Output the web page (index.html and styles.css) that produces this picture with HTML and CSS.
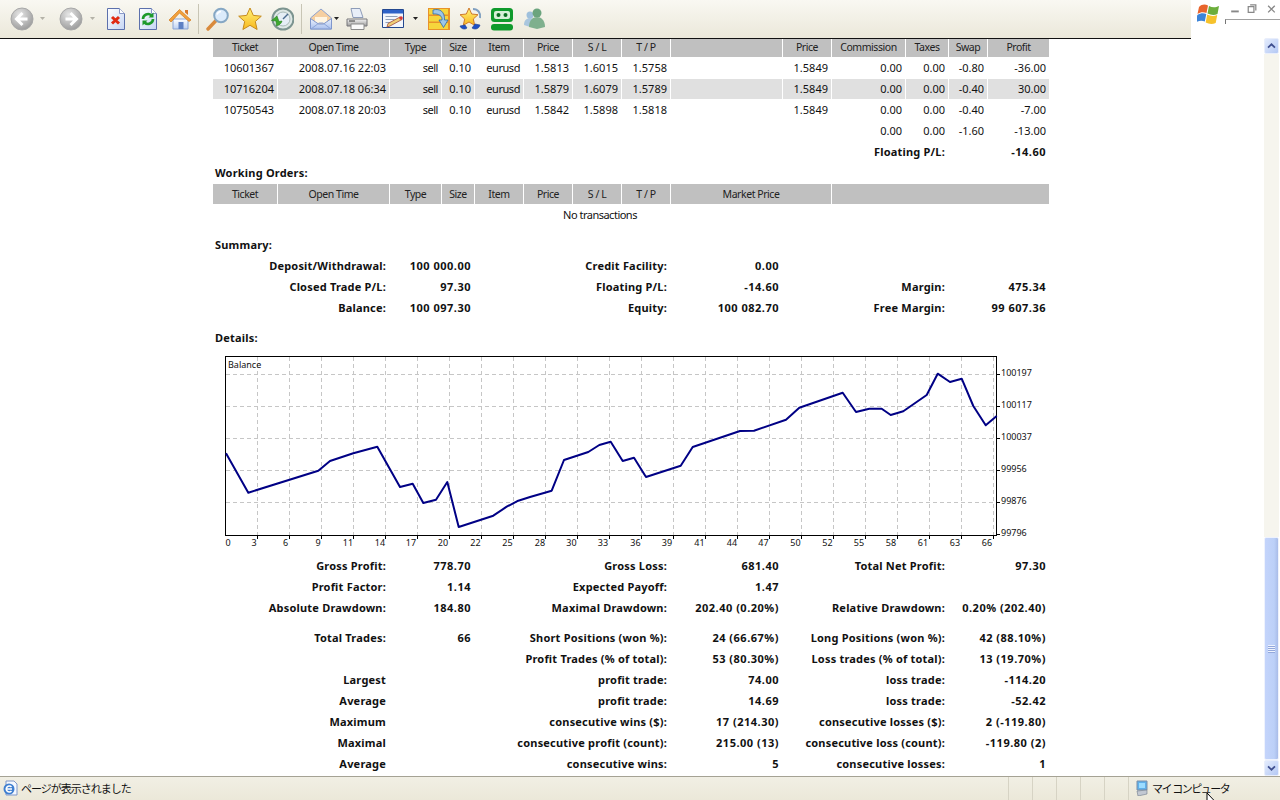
FILE: index.html
```html
<!DOCTYPE html>
<html lang="en">
<head>
<meta charset="utf-8">
<title>Statement</title>
<link rel="stylesheet" href="styles.css">
</head>
<body>
<svg class="defs" width="0" height="0" aria-hidden="true">
  <defs>
    <radialGradient id="gBall" cx="40%" cy="30%" r="75%"><stop offset="0" stop-color="#e6e6e6"/><stop offset="1" stop-color="#989898"/></radialGradient>
    <linearGradient id="gDoc" x1="0" y1="0" x2="1" y2="1"><stop offset="0" stop-color="#ffffff"/><stop offset="1" stop-color="#c6d6f4"/></linearGradient>
    <linearGradient id="gStar" x1="0" y1="0" x2="0" y2="1"><stop offset="0" stop-color="#fff27a"/><stop offset="1" stop-color="#f8b81c"/></linearGradient>
    <linearGradient id="gEnv" x1="0" y1="0" x2="0" y2="1"><stop offset="0" stop-color="#eef3fd"/><stop offset="1" stop-color="#a9c0ee"/></linearGradient>
    <linearGradient id="gGrey" x1="0" y1="0" x2="0" y2="1"><stop offset="0" stop-color="#f4f4f4"/><stop offset="1" stop-color="#9c9c9c"/></linearGradient>
    <linearGradient id="gWall" x1="0" y1="0" x2="0" y2="1"><stop offset="0" stop-color="#ffffff"/><stop offset="1" stop-color="#bcd0f2"/></linearGradient>
  </defs>
</svg>

<header class="top">
  <nav class="toolbar">
    <svg class="ic ml-10" viewBox="0 0 24 24"><circle cx="12" cy="12" r="11" fill="url(#gBall)" stroke="#a8a8a8"/><path d="M12.500 6 6.500 12l6 6M7 12h10.500" fill="none" stroke="#fff" stroke-width="3"/></svg>
    <svg class="drop ml-6" viewBox="0 0 5 3"><path d="M0 0h5L2.500 3z" fill="#b4b2a8"/></svg>
    <svg class="ic ml-14" viewBox="0 0 24 24"><circle cx="12" cy="12" r="11" fill="url(#gBall)" stroke="#a8a8a8"/><path d="M11.500 6l6 6-6 6M17 12H6.500" fill="none" stroke="#fff" stroke-width="3"/></svg>
    <svg class="drop ml-7" viewBox="0 0 5 3"><path d="M0 0h5L2.500 3z" fill="#b4b2a8"/></svg>
    <svg class="ic ic-doc ml-10" viewBox="0 0 22 24"><path d="M2.500 1.500h12l5 5v16h-17z" fill="url(#gDoc)" stroke="#5c70ac"/><path d="M14.500 1.500v5h5" fill="#fff" stroke="#8a9ac8"/><path d="M7 10l7 6.500M14 10l-7 6.500" stroke="#e02a14" stroke-width="3"/></svg>
    <svg class="ic ic-doc ml-10" viewBox="0 0 22 24"><path d="M2.500 1.500h12l5 5v16h-17z" fill="url(#gDoc)" stroke="#5c70ac"/><path d="M14.500 1.500v5h5" fill="#fff" stroke="#8a9ac8"/><path d="M6 12a5 5 0 0 1 8.500-3.500M16 12a5 5 0 0 1-8.500 3.500" fill="none" stroke="#1e9a2c" stroke-width="2.600"/><path d="M16.500 5.500v5h-5zM5.500 18.500v-5h5z" fill="#1e9a2c"/></svg>
    <svg class="ic ml-9" viewBox="0 0 24 24"><path d="M5 12h15v10H5z" fill="url(#gWall)" stroke="#8ba4d4"/><path d="M10.500 15h5v7h-5z" fill="#5d80c4"/><path d="M1 13 11.500 2.500 23 13l-2 1.500L11.500 6 3 15z" fill="#f2a03a" stroke="#d07a20" stroke-width=".7"/><path d="M17 3h3v5l-3-2.500z" fill="#d9782a"/></svg>
    <span class="sep ml-6"></span>
    <svg class="ic ml-7" viewBox="0 0 24 24"><path d="M2 22l8.500-9" stroke="#d98a3c" stroke-width="3.400" stroke-linecap="round"/><circle cx="15" cy="8.500" r="6.800" fill="#dcebfb" stroke="#86a7c4" stroke-width="2"/><path d="M11 7.500a4.500 4.500 0 0 1 4-3" fill="none" stroke="#fff" stroke-width="1.500"/></svg>
    <svg class="ic ml-8" viewBox="0 0 24 24"><path d="M12 1l3.300 7.400 8 .8-6 5.300 1.800 8L12 18.300 4.900 22.500l1.800-8-6-5.300 8-.8z" fill="url(#gStar)" stroke="#c68a1c"/></svg>
    <svg class="ic ml-8" viewBox="0 0 24 24"><circle cx="13" cy="12" r="10.500" fill="#dfe8e6" stroke="#7c9490" stroke-width="2"/><circle cx="13" cy="12" r="7" fill="#e6eef6" stroke="#a9bbb8"/><path d="M13 12l5-5" stroke="#4b6b8f" stroke-width="1.500"/><path d="M7 9 1.500 13.500l4.500.5.500 5c2.500-.5 5-2.500 5.500-5l-3 .5z" fill="#3ea82e" stroke="#26801f" stroke-width=".6"/></svg>
    <span class="sep ml-7"></span>
    <svg class="ic ml-7" viewBox="0 0 24 24"><path d="M1.500 11 12 2l10.500 9v11h-21z" fill="#f6cfa0" stroke="#8ea2cf"/><path d="M6 10h12v6H6z" fill="#fff5e2"/><path d="M1.500 11.500 9.500 17h5l8-5.500V22h-21z" fill="url(#gEnv)" stroke="#7f97cc"/><path d="M2 22l8-6h4l8 6" fill="none" stroke="#8ba4d8"/></svg>
    <svg class="drop ml-1" viewBox="0 0 5 3"><path d="M0 0h5L2.500 3z" fill="#222"/></svg>
    <svg class="ic ml-6" viewBox="0 0 24 24"><path d="M6 1.500h9l3 9H8z" fill="#e8eef8" stroke="#8e9cb8"/><path d="M2 12h20v7H2z" fill="url(#gGrey)" stroke="#77777a"/><path d="M6 17h13v5.500H6z" fill="#fafafa" stroke="#8a8a8a"/><path d="M4 14h6" stroke="#3c3c3c"/></svg>
    <svg class="ic ml-12" viewBox="0 0 24 24"><path d="M1.500 2.500h21v18h-21z" fill="#f3f6fc" stroke="#24488f"/><path d="M2 3h20v3.500H2z" fill="#2d62c8"/><path d="M4.500 9.500h12M4.500 12.500h9M4.500 15.500h6" stroke="#8fa0b8"/><path d="M6 20l1-3.500L19 10l2 2.500L9 19z" fill="#f0cf78" stroke="#a04a3c" stroke-width=".8"/><circle cx="20" cy="11" r="1.800" fill="#d83a3a"/></svg>
    <svg class="drop ml-8" viewBox="0 0 5 3"><path d="M0 0h5L2.500 3z" fill="#222"/></svg>
    <svg class="ic ml-9" viewBox="0 0 24 24"><path d="M1 1h22v22H1z" fill="#e8932a"/><path d="M2 2h19v5.500H2zM2 9h19v5.500H2zM2 16h19v6H2z" fill="#f6d63c"/><path d="M6 3c7-2 12 2 11.500 10h3.500l-4.500 7.500-4.500-7.500h3c.5-4-3-6.500-9-6z" fill="#9cc6e8" stroke="#2f6aa8" stroke-width=".8"/></svg>
    <svg class="ic ml-7" viewBox="0 0 24 24"><path d="M11 1l2.700 6 6.300.7-4.700 4.300 1.400 6.300L11 15l-5.700 3.300 1.400-6.300L2 7.700 8.300 7z" fill="url(#gStar)" stroke="#cf7a2c"/><path d="M15 2c5 0 8 4 7 9" fill="none" stroke="#7f9fc0" stroke-width="2"/><path d="M2 19c1 3 5 4 7 2l-2-3zM14 21c3 2 7 1 8-3l-5-1z" fill="#1f4fc4" stroke="#123a90" stroke-width=".6"/></svg>
    <svg class="ic ml-8" viewBox="0 0 24 24"><rect x="1" y="1" width="22" height="14" rx="3.500" fill="#0f9a2c"/><rect x="4" y="4" width="16" height="8" rx="2" fill="#d8f0d8"/><circle cx="8.500" cy="8" r="2" fill="#0b6e20"/><circle cx="15.500" cy="8" r="2" fill="#0b6e20"/><rect x="1" y="17" width="22" height="6.500" rx="3" fill="#0f9a2c"/></svg>
    <svg class="ic ml-8" viewBox="0 0 24 24"><circle cx="8" cy="8" r="3.500" fill="#9fc0dc"/><path d="M2 18c0-5 3-7 6-7s5 2 5 6l-5 3z" fill="#a9c6de"/><circle cx="15" cy="6" r="4.500" fill="#6ba47e"/><path d="M7 20c0-7 4-10 8-10s8 3 8 10l-8 2z" fill="#7fb08e"/></svg>
  </nav>
  <div class="corner">
    <svg class="winlogo" viewBox="0 0 24 24"><path d="M2 6c3-3 6-3 9-1.500L9.500 12C6 10.500 3.500 11 .5 13z" fill="#e8642c"/><path d="M12 5c3 1.500 6 2 10 0l-1.500 8c-3.500 1.500-6.500 1-10-.5z" fill="#6cae3c"/><path d="M.3 14c3-2 6-2.500 9-1l-1.500 7.500c-3-1.500-6-1-9 1z" fill="#3c84d8"/><path d="M10.200 13.500c3 1.500 6.500 2 10 .5L18.700 22c-3.500 1.500-7 1-10-.5z" fill="#f6c22c"/></svg>
    <div class="winctl">
      <svg class="controls" viewBox="0 0 55 19"><path d="M5 11h8" stroke="#888" stroke-width="2"/><path d="M23 6h6v6h-6zM25 4h6v6" fill="none" stroke="#888" stroke-width="1.300"/><path d="M44 5l7 7M51 5l-7 7" stroke="#888" stroke-width="1.400"/></svg>
      <div class="addr"></div>
    </div>
  </div>
</header>

<main class="main">
  <div class="page">
    <table class="stmt">
      <colgroup>
        <col class="c64"><col class="c111"><col class="c51"><col class="c32"><col class="c48"><col class="c48"><col class="c48"><col class="c48"><col class="c111"><col class="c48"><col class="c73"><col class="c42"><col class="c38"><col class="c61">
      </colgroup>
      <tr class="head"><th>Ticket</th><th>Open Time</th><th>Type</th><th>Size</th><th>Item</th><th>Price</th><th>S / L</th><th>T / P</th><th></th><th>Price</th><th>Commission</th><th>Taxes</th><th>Swap</th><th>Profit</th></tr>
      <tr class="data"><td>10601367</td><td>2008.07.16 22:03</td><td>sell</td><td>0.10</td><td>eurusd</td><td>1.5813</td><td>1.6015</td><td>1.5758</td><td></td><td>1.5849</td><td>0.00</td><td>0.00</td><td>-0.80</td><td>-36.00</td></tr>
      <tr class="data alt"><td>10716204</td><td>2008.07.18 06:34</td><td>sell</td><td>0.10</td><td>eurusd</td><td>1.5879</td><td>1.6079</td><td>1.5789</td><td></td><td>1.5849</td><td>0.00</td><td>0.00</td><td>-0.40</td><td>30.00</td></tr>
      <tr class="data"><td>10750543</td><td>2008.07.18 20:03</td><td>sell</td><td>0.10</td><td>eurusd</td><td>1.5842</td><td>1.5898</td><td>1.5818</td><td></td><td>1.5849</td><td>0.00</td><td>0.00</td><td>-0.40</td><td>-7.00</td></tr>
      <tr><td colspan="10"></td><td>0.00</td><td>0.00</td><td>-1.60</td><td>-13.00</td></tr>
      <tr class="b"><td colspan="8"></td><td></td><td colspan="3">Floating P/L:</td><td colspan="2">-14.60</td></tr>
      <tr class="b"><td colspan="14" class="sect">Working Orders:</td></tr>
      <tr class="head"><th>Ticket</th><th>Open Time</th><th>Type</th><th>Size</th><th>Item</th><th>Price</th><th>S / L</th><th>T / P</th><th colspan="2">Market Price</th><th colspan="4"></th></tr>
      <tr><td colspan="13" class="mid">No transactions</td><td></td></tr>
      <tr class="gap"><td colspan="14"></td></tr>
      <tr class="b"><td colspan="14" class="sect">Summary:</td></tr>
      <tr class="b"><td colspan="2">Deposit/Withdrawal:</td><td colspan="2">100 000.00</td><td colspan="4">Credit Facility:</td><td>0.00</td><td colspan="3"></td><td colspan="2"></td></tr>
      <tr class="b"><td colspan="2">Closed Trade P/L:</td><td colspan="2">97.30</td><td colspan="4">Floating P/L:</td><td>-14.60</td><td colspan="3">Margin:</td><td colspan="2">475.34</td></tr>
      <tr class="b"><td colspan="2">Balance:</td><td colspan="2">100 097.30</td><td colspan="4">Equity:</td><td>100 082.70</td><td colspan="3">Free Margin:</td><td colspan="2">99 607.36</td></tr>
      <tr class="gap"><td colspan="14"></td></tr>
      <tr class="b"><td colspan="14" class="sect">Details:</td></tr>
      <tr class="chartrow"><td colspan="14">
        <svg class="chart" viewBox="213 349 836 206">
          <path class="grid" d="M226 374.500H996M226 406.500H996M226 438.500H996M226 470.500H996M226 502.500H996M257.500 357V535M289.500 357V535M321.500 357V535M353.500 357V535M385.500 357V535M417.500 357V535M449.500 357V535M481.500 357V535M513.500 357V535M545.500 357V535M577.500 357V535M609.500 357V535M641.500 357V535M673.500 357V535M705.500 357V535M737.500 357V535M769.500 357V535M801.500 357V535M833.500 357V535M865.500 357V535M897.500 357V535M929.500 357V535M961.500 357V535M993.500 357V535"/>
          <rect class="frame" x="225.500" y="356.500" width="771" height="179"/>
          <path class="ticks" d="M997 374.500h3M997 406.500h3M997 438.500h3M997 470.500h3M997 502.500h3M997 534.500h3M257.500 536v3M289.500 536v3M321.500 536v3M353.500 536v3M385.500 536v3M417.500 536v3M449.500 536v3M481.500 536v3M513.500 536v3M545.500 536v3M577.500 536v3M609.500 536v3M641.500 536v3M673.500 536v3M705.500 536v3M737.500 536v3M769.500 536v3M801.500 536v3M833.500 536v3M865.500 536v3M897.500 536v3M929.500 536v3M961.500 536v3M993.500 536v3"/>
          <polyline class="curve" points="226,453.300 248.300,492.700 318.300,470.700 330,461 353.300,453.300 377.300,446.700 400,487 412.700,483.700 423.300,503 436,499.700 447.300,482 458.700,527 493.300,515.700 506.700,506.700 518.300,500.700 530,497 551.700,490.700 564,460 588.300,452 599.300,445 610.700,441.700 622.700,461 634,457.700 646,477 680.700,465.700 692.700,447 740,431 754,430.700 786,419.700 799.300,407.700 842.700,392.700 856,412 869.300,408.700 881.700,408.700 890.700,415 903.300,411.300 926.700,395 937.700,373.700 950,382 961.700,378.700 973.300,406 985.700,425.300 996.700,416"/>
          <text class="lbl" x="228" y="368">Balance</text>
          <g class="ylbl">
            <text x="1001" y="376">100197</text><text x="1001" y="408">100117</text><text x="1001" y="440">100037</text><text x="1001" y="472">99956</text><text x="1001" y="504">99876</text><text x="1001" y="536">99796</text>
          </g>
          <g class="xlbl">
            <text x="228" y="546">0</text><text x="254" y="546">3</text><text x="285.500" y="546">6</text><text x="318" y="546">9</text><text x="348" y="546">11</text><text x="380" y="546">14</text><text x="411" y="546">17</text><text x="443" y="546">20</text><text x="475.500" y="546">22</text><text x="507.500" y="546">25</text><text x="540" y="546">28</text><text x="571.500" y="546">30</text><text x="603" y="546">33</text><text x="635.500" y="546">36</text><text x="667" y="546">39</text><text x="699.500" y="546">41</text><text x="732" y="546">44</text><text x="763.500" y="546">47</text><text x="795.500" y="546">50</text><text x="827.500" y="546">52</text><text x="859" y="546">55</text><text x="891" y="546">58</text><text x="923" y="546">61</text><text x="955" y="546">63</text><text x="987" y="546">66</text>
          </g>
        </svg>
      </td></tr>
      <tr class="b"><td colspan="2">Gross Profit:</td><td colspan="2">778.70</td><td colspan="4">Gross Loss:</td><td>681.40</td><td colspan="3">Total Net Profit:</td><td colspan="2">97.30</td></tr>
      <tr class="b"><td colspan="2">Profit Factor:</td><td colspan="2">1.14</td><td colspan="4">Expected Payoff:</td><td>1.47</td><td colspan="3"></td><td colspan="2"></td></tr>
      <tr class="b"><td colspan="2">Absolute Drawdown:</td><td colspan="2">184.80</td><td colspan="4">Maximal Drawdown:</td><td>202.40 (0.20%)</td><td colspan="3">Relative Drawdown:</td><td colspan="2">0.20% (202.40)</td></tr>
      <tr class="gap"><td colspan="14"></td></tr>
      <tr class="b"><td colspan="2">Total Trades:</td><td colspan="2">66</td><td colspan="4">Short Positions (won %):</td><td>24 (66.67%)</td><td colspan="3">Long Positions (won %):</td><td colspan="2">42 (88.10%)</td></tr>
      <tr class="b"><td colspan="2"></td><td colspan="2"></td><td colspan="4">Profit Trades (% of total):</td><td>53 (80.30%)</td><td colspan="3">Loss trades (% of total):</td><td colspan="2">13 (19.70%)</td></tr>
      <tr class="b"><td colspan="2">Largest</td><td colspan="2"></td><td colspan="4">profit trade:</td><td>74.00</td><td colspan="3">loss trade:</td><td colspan="2">-114.20</td></tr>
      <tr class="b"><td colspan="2">Average</td><td colspan="2"></td><td colspan="4">profit trade:</td><td>14.69</td><td colspan="3">loss trade:</td><td colspan="2">-52.42</td></tr>
      <tr class="b"><td colspan="2">Maximum</td><td colspan="2"></td><td colspan="4">consecutive wins ($):</td><td>17 (214.30)</td><td colspan="3">consecutive losses ($):</td><td colspan="2">2 (-119.80)</td></tr>
      <tr class="b"><td colspan="2">Maximal</td><td colspan="2"></td><td colspan="4">consecutive profit (count):</td><td>215.00 (13)</td><td colspan="3">consecutive loss (count):</td><td colspan="2">-119.80 (2)</td></tr>
      <tr class="b"><td colspan="2">Average</td><td colspan="2"></td><td colspan="4">consecutive wins:</td><td>5</td><td colspan="3">consecutive losses:</td><td colspan="2">1</td></tr>
    </table>
  </div>
  <aside class="scrollbar">
    <div class="sbtn"><svg viewBox="0 0 15 16"><path d="M3.500 10 7.500 6l4 4" fill="none" stroke="#3f4f8f" stroke-width="2"/></svg></div>
    <div class="track"></div>
    <div class="thumb"><span class="grip"></span></div>
    <div class="sbtn"><svg viewBox="0 0 15 16"><path d="M3.500 6l4 4 4-4" fill="none" stroke="#3f4f8f" stroke-width="2"/></svg></div>
  </aside>
</main>

<footer class="status">
  <div class="msg">
    <svg class="ie" viewBox="0 0 16 16"><path d="M4 1h8l3 3v11H4z" fill="#f4f8ff" stroke="#7f97c8"/><circle cx="7" cy="9" r="5.500" fill="#3f7fd0"/><path d="M3.500 9h6.500M9.500 7A3 3 0 1 0 9.500 11" fill="none" stroke="#fff" stroke-width="1.500"/></svg>
    <span>ページが表示されました</span>
  </div>
  <div class="cell"></div><div class="cell"></div><div class="cell"></div><div class="cell"></div><div class="cell"></div>
  <div class="zone">
    <svg class="pc" viewBox="0 0 12 16"><path d="M1 1h10v9H1z" fill="#5fb0ea" stroke="#7c8fa8"/><path d="M3 3h6v5H3z" fill="#9bdcff"/><path d="M1 11l10-1v4l-9 2z" fill="#c2c8d2" stroke="#6f7a8c" stroke-width=".6"/></svg>
    <span>マイ コンピュータ</span>
  </div>
</footer>
<svg class="cursor" viewBox="0 0 12 19"><path d="M1 1v14l3.500-3 2.500 6 2-1-2.500-5.500H11z" fill="#fff" stroke="#000"/></svg>
</body>
</html>
```
FILE: styles.css
```css
* { box-sizing: border-box; }
html, body { height: 100%; }
body {
  margin: 0;
  width: 1280px;
  height: 800px;
  display: flex;
  flex-direction: column;
  overflow: hidden;
  position: relative;
  background: #fff;
  color: #111;
  font: 11px "Noto Sans", "Noto Sans CJK JP", sans-serif;
}
.defs { display: block; flex: none; }

/* browser chrome */
.top { flex: none; height: 39px; display: flex; }
.toolbar {
  width: 1191px;
  display: flex;
  align-items: center;
  padding-bottom: 1px;
  background: linear-gradient(#f9f8f2, #ebe8da);
  border-bottom: 1px solid #111;
}
.ic { flex: none; width: 24px; height: 24px; }
.ic-doc { width: 22px; }
.drop { flex: none; width: 5px; height: 3px; }
.sep { flex: none; width: 1px; height: 30px; background: #c8c5b5; }
.ml-1 { margin-left: 1px; }
.ml-6 { margin-left: 6px; }
.ml-7 { margin-left: 7px; }
.ml-8 { margin-left: 8px; }
.ml-9 { margin-left: 9px; }
.ml-10 { margin-left: 10px; }
.ml-12 { margin-left: 12px; }
.ml-14 { margin-left: 14px; }

.corner { flex: 1; display: flex; align-items: flex-start; padding: 1px 0 0 6px; background: #fff; }
.winlogo { flex: none; width: 24px; height: 24px; }
.winctl { flex: 1; margin-left: 4px; }
.controls { display: block; width: 55px; height: 18px; }
.addr { height: 5px; border-top: 1px solid #a0a0a0; border-left: 1px solid #777; }

/* content */
.main { flex: 1; min-height: 0; display: flex; }
.page { flex: 1; min-width: 0; overflow: hidden; padding-left: 212px; }
.stmt {
  width: 838px;
  margin-top: -3px;
  table-layout: fixed;
  border-collapse: separate;
  border-spacing: 1px;
}
.c32 { width: 32px; } .c38 { width: 38px; } .c42 { width: 42px; } .c48 { width: 48px; }
.c51 { width: 51px; } .c61 { width: 61px; } .c64 { width: 64px; } .c73 { width: 73px; } .c111 { width: 111px; }
.stmt td, .stmt th {
  height: 20px;
  padding: 0 3px;
  font-size: 11px;
  line-height: 14px;
  white-space: nowrap;
  text-align: right;
}
.stmt th { background: #c0c0c0; font-size: 10.5px; font-weight: 400; letter-spacing: -.45px; text-align: center; color: #222; }
.alt td { background: #e0e0e0; }
.data td:nth-child(3), .data td:nth-child(5) { letter-spacing: -.45px; }
.b td { font-weight: 700; }
.b td:nth-child(odd) { letter-spacing: .2px; }
.b td:nth-child(even) { letter-spacing: .5px; }
.stmt .sect { text-align: left; padding-left: 2px; letter-spacing: .1px; }
.stmt .mid { text-align: center; letter-spacing: -.5px; }
.gap td { height: 8px; padding: 0; line-height: 0; font-size: 0; }
.chartrow td { height: 206px; padding: 0; }

.chart { display: block; width: 836px; height: 206px; }
.grid { fill: none; stroke: #c6c6c6; stroke-dasharray: 4 3; }
.frame { fill: none; stroke: #000; }
.ticks { fill: none; stroke: #000; }
.curve { fill: none; stroke: #000085; stroke-width: 2; stroke-linejoin: round; }
.lbl, .ylbl, .xlbl { font-size: 9px; fill: #111; }
.xlbl { text-anchor: middle; }

/* scrollbar */
.scrollbar { flex: none; width: 16px; margin-top: -1px; padding-right: 1px; display: flex; flex-direction: column; }
.sbtn { flex: none; height: 16px; background: linear-gradient(135deg, #e4ecfd, #b4c8f4); border: 1px solid #e9eefb; border-radius: 2px; }
.sbtn svg { display: block; width: 100%; height: 100%; }
.track { flex: 1; background: #f6f5ee; }
.thumb {
  flex: none;
  height: 223px;
  display: flex;
  align-items: center;
  justify-content: center;
  background: linear-gradient(90deg, #c4d4fb, #bcd0f8 70%, #a9bce8);
  border: 1px solid #eef2fd;
  border-radius: 2px;
}
.grip { width: 7px; height: 8px; background: repeating-linear-gradient(#eef3fe 0 1px, #93a8dc 1px 2px); }

/* status bar */
.status {
  flex: none;
  height: 24px;
  display: flex;
  align-items: stretch;
  background: linear-gradient(#f1efe4, #ebe8d9);
  border-top: 1px solid #a5a294;
  font-size: 11px;
  color: #111;
}
.msg { flex: 1; display: flex; align-items: center; gap: 3px; padding: 0 0 2px 2px; letter-spacing: -1px; }
.ie { flex: none; width: 16px; height: 16px; }
.cell { flex: none; width: 24px; border-left: 1px solid #d6d3c4; }
.zone { flex: none; width: 152px; display: flex; align-items: center; gap: 4px; padding: 0 0 2px 7px; border-left: 1px solid #d6d3c4; letter-spacing: -1.5px; }
.pc { flex: none; width: 12px; height: 16px; }
.cursor { position: absolute; left: 1206px; top: 792px; width: 12px; height: 19px; }
```
